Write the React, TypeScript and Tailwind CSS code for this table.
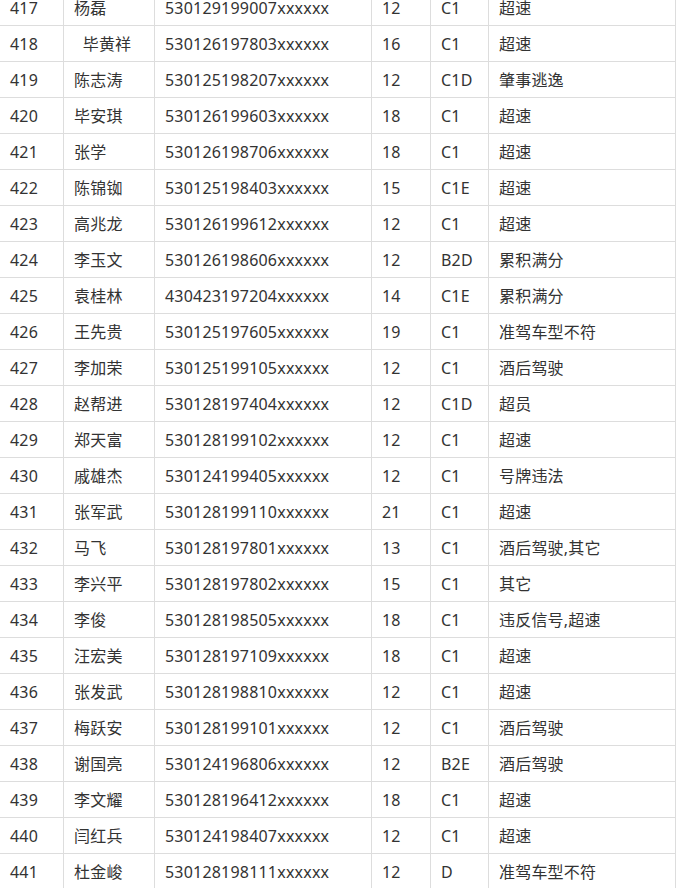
const rows: [string, string, string, string, string, string][] = [
  ["417", "杨磊", "530129199007xxxxxx", "12", "C1", "超速"],
  ["418", "\u00a0\u00a0毕黄祥", "530126197803xxxxxx", "16", "C1", "超速"],
  ["419", "陈志涛", "530125198207xxxxxx", "12", "C1D", "肇事逃逸"],
  ["420", "毕安琪", "530126199603xxxxxx", "18", "C1", "超速"],
  ["421", "张学", "530126198706xxxxxx", "18", "C1", "超速"],
  ["422", "陈锦铷", "530125198403xxxxxx", "15", "C1E", "超速"],
  ["423", "高兆龙", "530126199612xxxxxx", "12", "C1", "超速"],
  ["424", "李玉文", "530126198606xxxxxx", "12", "B2D", "累积满分"],
  ["425", "袁桂林", "430423197204xxxxxx", "14", "C1E", "累积满分"],
  ["426", "王先贵", "530125197605xxxxxx", "19", "C1", "准驾车型不符"],
  ["427", "李加荣", "530125199105xxxxxx", "12", "C1", "酒后驾驶"],
  ["428", "赵帮进", "530128197404xxxxxx", "12", "C1D", "超员"],
  ["429", "郑天富", "530128199102xxxxxx", "12", "C1", "超速"],
  ["430", "戚雄杰", "530124199405xxxxxx", "12", "C1", "号牌违法"],
  ["431", "张军武", "530128199110xxxxxx", "21", "C1", "超速"],
  ["432", "马飞", "530128197801xxxxxx", "13", "C1", "酒后驾驶,其它"],
  ["433", "李兴平", "530128197802xxxxxx", "15", "C1", "其它"],
  ["434", "李俊", "530128198505xxxxxx", "18", "C1", "违反信号,超速"],
  ["435", "汪宏美", "530128197109xxxxxx", "18", "C1", "超速"],
  ["436", "张发武", "530128198810xxxxxx", "12", "C1", "超速"],
  ["437", "梅跃安", "530128199101xxxxxx", "12", "C1", "酒后驾驶"],
  ["438", "谢国亮", "530124196806xxxxxx", "12", "B2E", "酒后驾驶"],
  ["439", "李文耀", "530128196412xxxxxx", "18", "C1", "超速"],
  ["440", "闫红兵", "530124198407xxxxxx", "12", "C1", "超速"],
  ["441", "杜金峻", "530128198111xxxxxx", "12", "D", "准驾车型不符"],
];

const widths = ["w-[64px]", "w-[91px]", "w-[217px]", "w-[59px]", "w-[58px]", "w-[187px]"];

export default function App() {
  return (
    <div className="h-[888px] w-[679px] overflow-hidden bg-white">
      <div
        className="-mt-[11px] w-[676px] border-t border-[#dddddd] text-[16px] tracking-[0.2px] text-[#333333]"
        style={{ fontFamily: '"Noto Sans", "Noto Sans CJK SC", sans-serif' }}
      >
        {rows.map((row) => (
          <div key={row[0]} className="flex h-[36px] border-b border-[#dddddd]">
            {row.map((cell, i) => (
              <div
                key={i}
                className={`${widths[i]} flex shrink-0 items-center whitespace-pre border-r border-[#dddddd] pl-[10px]`}
              >
                {cell}
              </div>
            ))}
          </div>
        ))}
      </div>
    </div>
  );
}
